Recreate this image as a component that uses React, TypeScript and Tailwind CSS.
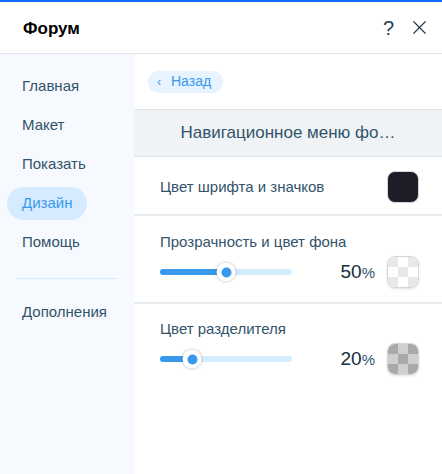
import React from 'react';

const font = { fontFamily: '"Liberation Sans", Arial, sans-serif' };

const Checker: React.FC<{ light: string; dark: string }> = ({ light, dark }) => (
  <div className="h-8 w-8 rounded-lg border border-gray-300 overflow-hidden grid grid-cols-3 grid-rows-3 shadow-sm">
    {Array.from({ length: 9 }).map((_, i) => (
      <div key={i} style={{ background: i % 2 === 0 ? dark : light }} />
    ))}
  </div>
);

// thumb centre travels between 9.5px and 122.5px of the 132px track
const Slider: React.FC<{ value: number }> = ({ value }) => {
  const pos = 9.5 + (113 * value) / 100;
  return (
    <div className="relative h-[6px] w-[132px] rounded-full bg-[#d3edff]">
      <div className="h-full rounded-full bg-[#3899ec]" style={{ width: `${pos}px` }} />
      <div
        className="absolute top-1/2 h-[19px] w-[19px] -translate-x-1/2 -translate-y-1/2 rounded-full bg-white shadow-[0_0_3px_rgba(22,45,61,0.35)] flex items-center justify-center"
        style={{ left: `${pos}px` }}
      >
        <div className="h-[10px] w-[10px] rounded-full bg-[#3899ec]" />
      </div>
    </div>
  );
};

const SliderRow: React.FC<{ label: string; value: number; light: string; dark: string; top?: string }> = ({
  label,
  value,
  light,
  dark,
  top = 'pt-[16px]',
}) => (
  <div className={`h-[86px] ${top} pl-[26px] pr-[23px]`}>
    <div className="text-[15px] leading-[20px] text-[#32536a] mb-[4px]">{label}</div>
    <div className="h-[32px] flex items-center justify-between">
      <Slider value={value} />
      <div className="flex items-center gap-[12px]">
        <span className="text-[#162d3d]">
          <span className="text-[19px]">{value}</span>
          <span className="text-[15px] text-[#32536a]">%</span>
        </span>
        <Checker light={light} dark={dark} />
      </div>
    </div>
  </div>
);

const App: React.FC = () => {
  const nav = ['Главная', 'Макет', 'Показать', 'Дизайн', 'Помощь'];

  return (
    <div className="w-[442px] h-[474px] bg-white flex flex-col overflow-hidden" style={font}>
      <div className="h-[2px] bg-[#116dff]" />
      <div className="h-[52px] flex items-center justify-between pl-[23px] pr-[15px] border-b border-[#dfe5eb]">
        <h1 className="text-[17px] font-bold text-black pt-[2px]">Форум</h1>
        <div className="flex items-center gap-[18px] text-[#162d3d]">
          <span className="text-[20px] text-[#2b3d4c]">?</span>
          <svg width="15" height="15" viewBox="0 0 16 16" fill="none" stroke="currentColor" strokeWidth="1.4">
            <path d="M1.5 1.5l13 13M14.5 1.5l-13 13" />
          </svg>
        </div>
      </div>

      <div className="flex flex-1">
        <aside className="w-[134px] bg-[#f6faff] pt-[16px] px-[7px]">
          {nav.map(item => (
            <div
              key={item}
              className={`h-[33px] mb-[6px] flex items-center px-[15px] text-[15px] rounded-full w-fit ${
                item === 'Дизайн' ? 'bg-[#d6ebff] text-[#3899ec]' : 'text-[#32536a]'
              }`}
            >
              {item}
            </div>
          ))}
          <div className="mx-[9px] mt-[19px] mb-[17px] border-t border-[#d6ebff]" />
          <div className="h-[33px] flex items-center px-[15px] text-[15px] text-[#32536a]">Дополнения</div>
        </aside>

        <main className="flex-1 flex flex-col">
          <div className="h-[55px] flex items-center pl-[14px]">
            <div className="h-[22px] flex items-center gap-[10px] rounded-full bg-[#e7f3ff] pl-[9px] pr-[12px] text-[14px] text-[#3899ec]">
              <span className="text-[12px]">‹</span>
              <span>Назад</span>
            </div>
          </div>

          <div className="h-[48px] bg-[#f0f3f5] border-y border-[#dfe5eb] flex items-center justify-center text-[17px] text-[#32536a]">
            Навигационное меню фо…
          </div>

          <div className="h-[59px] flex items-center justify-between pl-[26px] pr-[23px] pt-[3px] border-b-2 border-[#e6ebf0]">
            <span className="text-[15px] text-[#32536a]">Цвет шрифта и значков</span>
            <div className="h-8 w-8 rounded-lg bg-[#1e1d27] border border-gray-300" />
          </div>

          <div className="border-b-2 border-[#e6ebf0]">
            <SliderRow label="Прозрачность и цвет фона" value={50} light="#ffffff" dark="#e8e8e8" />
          </div>
          <SliderRow label="Цвет разделителя" value={20} light="#cfcfcf" dark="#a9a9a9" top="pt-[15px]" />
        </main>
      </div>
    </div>
  );
};

export default App;
